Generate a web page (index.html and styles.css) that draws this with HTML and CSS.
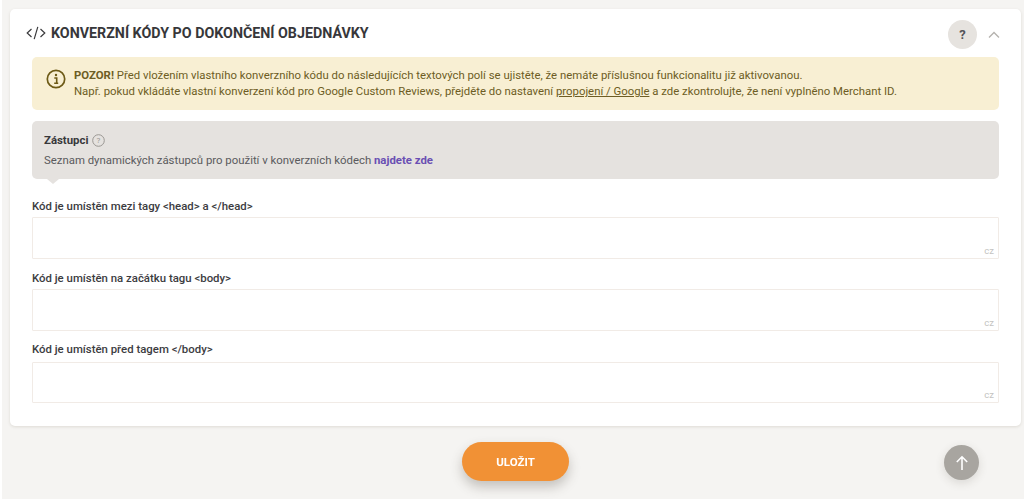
FILE: index.html
```html
<!DOCTYPE html>
<html lang="cs">
<head>
<meta charset="utf-8">
<title>Konverzní kódy</title>
<link rel="stylesheet" href="styles.css">
</head>
<body>
<main class="page">
  <section class="card">
    <header class="card-head">
      <svg class="code-icon" width="20" height="14" viewBox="0 0 20 14" fill="none" stroke="#3b3b3d" stroke-width="1.2"><path d="M5.5 3 1.2 7l4.3 4M14.500 3l4.300 4-4.300 4M11.800 .8 8.200 13.200"/></svg>
      <h1 class="card-title">KONVERZNÍ KÓDY PO DOKONČENÍ OBJEDNÁVKY</h1>
      <button class="help-btn" type="button">?</button>
      <svg class="chevron" width="12" height="8" viewBox="0 0 12 8" fill="none" stroke="#b5b2ae" stroke-width="1.300"><path d="M1 6.500 6 1.500l5 5"/></svg>
    </header>
    <div class="card-body">
      <div class="alert">
        <svg class="alert-icon" width="20" height="20" viewBox="0 0 20 20" fill="none"><circle cx="10" cy="10" r="8.700" stroke="#6d5a16" stroke-width="1.700"/><circle cx="10" cy="6" r="1.200" fill="#6d5a16"/><path d="M8.300 9h2.400v5M8.200 14.200h4" stroke="#6d5a16" stroke-width="1.600"/></svg>
        <p class="alert-text"><strong>POZOR!</strong> Před vložením vlastního konverzního kódu do následujících textových polí se ujistěte, že nemáte příslušnou funkcionalitu již aktivovanou.<br>Např. pokud vkládáte vlastní konverzení kód pro Google Custom Reviews, přejděte do nastavení <a class="alert-link" href="#">propojení / Google</a> a zde zkontrolujte, že není vyplněno Merchant ID.</p>
      </div>
      <div class="note">
        <div class="note-title"><strong>Zástupci</strong>
          <svg width="13" height="13" viewBox="0 0 13 13" fill="none"><circle cx="6.500" cy="6.500" r="5.800" stroke="#9a9793"/><text x="6.500" y="9.300" text-anchor="middle" class="note-q">?</text></svg>
        </div>
        <p class="note-text">Seznam dynamických zástupců pro použití v konverzních kódech <a class="note-link" href="#">najdete zde</a></p>
      </div>
      <div class="field field-first">
        <label class="field-label">Kód je umístěn mezi tagy &lt;head&gt; a &lt;/head&gt;</label>
        <div class="field-box"><span class="lang">CZ</span></div>
      </div>
      <div class="field">
        <label class="field-label">Kód je umístěn na začátku tagu &lt;body&gt;</label>
        <div class="field-box"><span class="lang">CZ</span></div>
      </div>
      <div class="field field-last">
        <label class="field-label">Kód je umístěn před tagem &lt;/body&gt;</label>
        <div class="field-box"><span class="lang">CZ</span></div>
      </div>
    </div>
  </section>
  <footer class="actions">
    <button class="save-btn" type="button">ULOŽIT</button>
    <button class="top-btn" type="button" aria-label="Nahoru"><svg width="14" height="16" viewBox="0 0 14 16" fill="none" stroke="#fff" stroke-width="1.600"><path d="M7 15V2M1.800 7 7 1.800 12.200 7"/></svg></button>
  </footer>
</main>
</body>
</html>
```
FILE: styles.css
```css
* { box-sizing: border-box; }
html, body { margin: 0; height: 100%; background: #fff; }
body { font-family: Roboto, "Liberation Sans", sans-serif; color: #3b3b3d; overflow: hidden; }
.page { height: 499px; margin-left: 2px; background: #f5f4f2; padding: 9px 3px 0 8px; filter: blur(.5px); }
.card { height: 417px; background: #fff; border-radius: 5px; box-shadow: 0 1px 3px rgba(120,110,90,.18); }
.card-head { height: 48px; display: flex; align-items: center; padding: 0 21px 0 16px; }
.code-icon { flex: none; }
.card-title { margin: 0 0 0 5px; flex: 1; font-size: 14.25px; font-weight: 700; color: #37373a; }
.help-btn { width: 29px; height: 29px; margin: 2px 11px 0 0; border: 0; border-radius: 50%; background: #e6e3df; color: #55555a; font: 700 13px Roboto, sans-serif; padding: 0; }
.chevron { margin-top: 3px; }
.card-body { padding: 0 22px; }
.alert { height: 53px; display: flex; gap: 8px; padding: 10px 14px; background: #f8efd3; border-radius: 5px; }
.alert-icon { flex: none; margin-top: 2px; }
.alert-text { margin: 0; font-size: 11.36px; line-height: 16px; color: #6d5d24; }
.alert-text strong { font-weight: 700; }
.alert-link { color: inherit; text-decoration: underline; }
.note { position: relative; height: 58px; margin-top: 11px; padding: 11px 12px; background: #e5e2df; border-radius: 5px; }
.note::after { content: ""; position: absolute; left: 15px; bottom: -5px; border-style: solid; border-width: 5px 6px 0; border-color: #e5e2df transparent transparent; }
.note-title { display: flex; align-items: center; gap: 4px; height: 16px; font-size: 11.4px; color: #38383b; }
.note-q { font: 400 8px Roboto, sans-serif; fill: #9a9793; }
.note-text { margin: 4px 0 0; font-size: 11.38px; line-height: 16px; color: #5a5a5d; }
.note-link { color: #6a4fb3; font-weight: 700; text-decoration: none; }
.field { margin-top: 11px; }
.field-first { margin-top: 19px; }
.field-label { display: block; height: 19px; padding-top: 1px; font-size: 11.4px; line-height: 15px; font-weight: 500; color: #3c3c3f; }
.field-last .field-label { height: 20px; padding-top: 0; }
.field-last .field-box { height: 41px; }
.field-box { position: relative; height: 42px; border: 1px solid #f1ebe6; border-radius: 1px; background: #fff; }
.lang { position: absolute; right: 4px; bottom: 2px; font-size: 9.5px; color: #c4c3c1; text-transform: lowercase; }
.actions { position: relative; height: 73px; display: flex; justify-content: center; padding: 16px 0 0; }
.save-btn { width: 107px; height: 39px; border: 0; border-radius: 20px; background: #f19135; color: #fff; font: 700 11.500px Roboto, sans-serif; box-shadow: 0 6px 12px rgba(70,60,50,.28); }
.top-btn { position: absolute; left: 934px; top: 19px; width: 35px; height: 35px; display: flex; align-items: center; justify-content: center; padding: 0; border: 0; border-radius: 50%; background: #a8a5a0; box-shadow: 0 3px 10px rgba(70,60,50,.15); }
```
